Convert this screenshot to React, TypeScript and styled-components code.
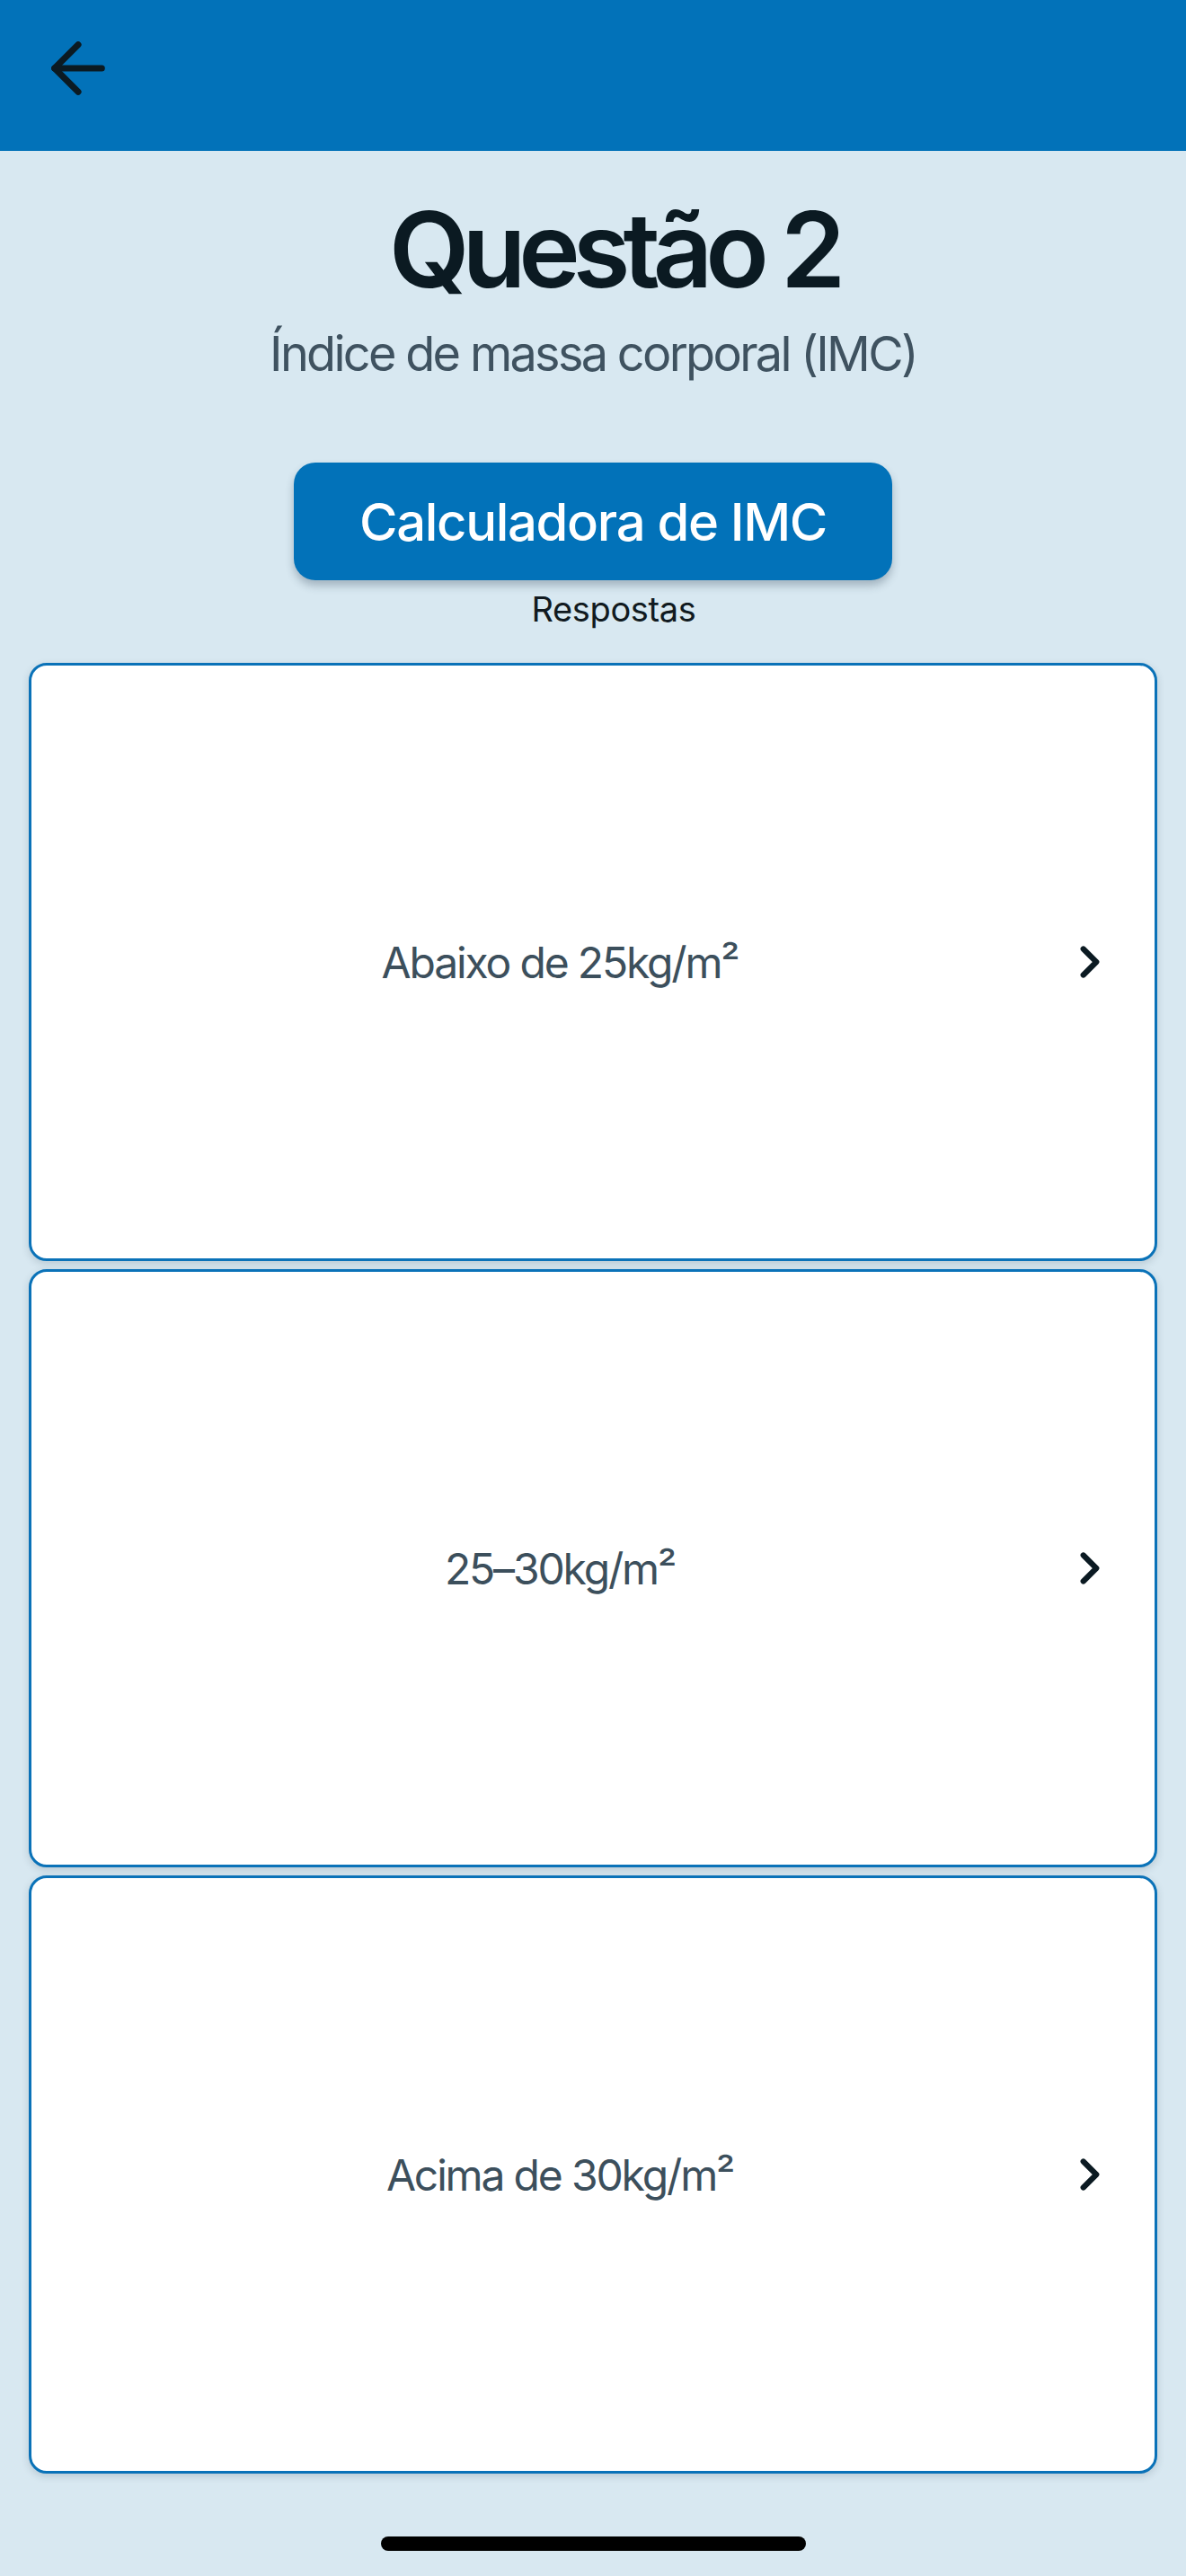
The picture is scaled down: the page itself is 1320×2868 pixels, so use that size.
import React from "react";
import styled, { createGlobalStyle } from "styled-components";

const GlobalStyle = createGlobalStyle`
  * { box-sizing: border-box; }
  html, body { margin: 0; padding: 0; }
  body {
    background: #d8e8f1;
    font-family: "Inter", "Noto Sans", "Liberation Sans", sans-serif;
  }
`;

const Screen = styled.div`
  width: 1320px;
  min-height: 2868px;
  background: #d8e8f1;
  display: flex;
  flex-direction: column;
`;

const Header = styled.header`
  height: 168px;
  background: #0272b9;
  display: flex;
  align-items: flex-start;
  padding: 31px 0 0 42px;
`;

const BackButton = styled.button`
  border: 0;
  background: transparent;
  padding: 0;
  width: 90px;
  height: 90px;
  color: #0b1a22;
  display: flex;
`;

const Main = styled.main`
  display: flex;
  flex-direction: column;
  align-items: center;
  padding: 0 32px;
`;

const Title = styled.h1`
  margin: 52px 0 0;
  padding-left: 46px;
  font-size: 116px;
  line-height: 1;
  font-weight: 600;
  color: #0b1a22;
  letter-spacing: -0.07em;
`;

const Subtitle = styled.p`
  margin: 31px 0 0;
  font-size: 54px;
  line-height: 1;
  font-weight: 400;
  color: #3f5260;
  letter-spacing: -0.05em;
`;

const CalcButton = styled.button`
  margin-top: 94px;
  width: 666px;
  height: 131px;
  border: 0;
  border-radius: 24px;
  background: #0272b9;
  color: #ffffff;
  font-family: inherit;
  font-size: 58px;
  font-weight: 500;
  letter-spacing: -0.023em;
  box-shadow: 0 6px 10px rgba(40, 60, 80, 0.3);
  display: flex;
  align-items: center;
  justify-content: center;
`;

const SectionLabel = styled.div`
  margin-top: 13px;
  padding-left: 46px;
  font-size: 38px;
  line-height: 1;
  color: #111a20;
  letter-spacing: -0.01em;
`;

const CardList = styled.div`
  margin-top: 41px;
  width: 100%;
  display: flex;
  flex-direction: column;
  gap: 9px;
`;

const AnswerCard = styled.button`
  height: 666px;
  width: 100%;
  background: #ffffff;
  border: 3px solid #0a72b8;
  border-radius: 20px;
  box-shadow: 0 3px 8px rgba(40, 60, 80, 0.18);
  display: flex;
  align-items: center;
  padding: 0 43px 0 27px;
  font-family: inherit;
`;

const AnswerText = styled.span`
  flex: 1;
  text-align: center;
  font-size: 48px;
  font-weight: 400;
  color: #3c4f5c;
  letter-spacing: -0.045em;
`;

const Chevron = styled.span`
  width: 58px;
  height: 58px;
  display: flex;
  color: #0b1a22;
`;

const HomeIndicator = styled.div`
  margin: auto auto 28px;
  width: 473px;
  height: 16px;
  border-radius: 8px;
  background: #000000;
`;

const ArrowLeftIcon = () => (
  <svg width="90" height="90" viewBox="0 0 24 24" fill="none" stroke="currentColor" strokeWidth="1.9" strokeLinecap="round" strokeLinejoin="round">
    <path d="m12 19-7-7 7-7" />
    <path d="M19 12H5" />
  </svg>
);

const ChevronRightIcon = () => (
  <svg width="58" height="58" viewBox="0 0 24 24" fill="none" stroke="currentColor" strokeWidth="2.6" strokeLinecap="round" strokeLinejoin="round">
    <path d="m9 18 6-6-6-6" />
  </svg>
);

const answers = ["Abaixo de 25kg/m²", "25–30kg/m²", "Acima de 30kg/m²"];

export default function App() {
  return (
    <>
      <GlobalStyle />
      <Screen>
        <Header>
          <BackButton aria-label="Voltar">
            <ArrowLeftIcon />
          </BackButton>
        </Header>
        <Main>
          <Title>Questão 2</Title>
          <Subtitle>Índice de massa corporal (IMC)</Subtitle>
          <CalcButton>Calculadora de IMC</CalcButton>
          <SectionLabel>Respostas</SectionLabel>
          <CardList>
            {answers.map((a) => (
              <AnswerCard key={a}>
                <AnswerText>{a}</AnswerText>
                <Chevron>
                  <ChevronRightIcon />
                </Chevron>
              </AnswerCard>
            ))}
          </CardList>
        </Main>
        <HomeIndicator />
      </Screen>
    </>
  );
}
